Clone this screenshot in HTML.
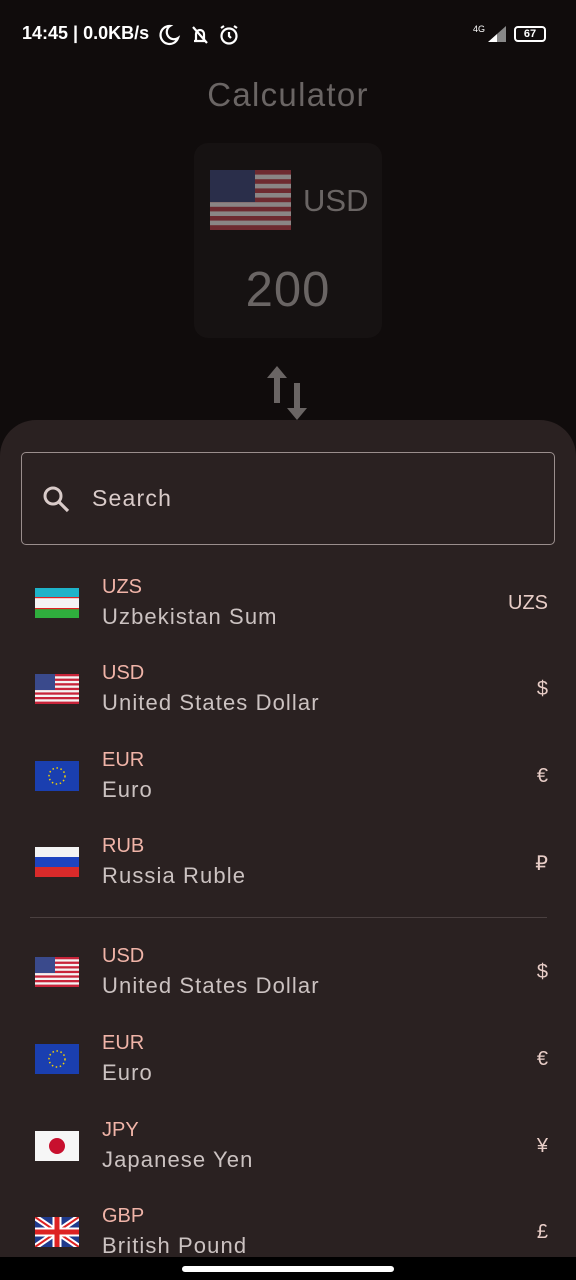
<!DOCTYPE html>
<html><head><meta charset="utf-8"><style>
*{margin:0;padding:0;box-sizing:border-box}
html,body{width:576px;height:1280px;overflow:hidden}
body{background:#100c0c;position:relative;font-family:"Liberation Sans",sans-serif}
.abs{position:absolute}
.sb{color:#fff;font-size:18px;font-weight:bold;top:23px;left:22px}
.title{top:76px;width:576px;text-align:center;color:#6a6564;font-size:33px;letter-spacing:1.3px}
.card{left:194px;top:143px;width:188px;height:195px;background:#161212;border-radius:14px}
.sheet{left:0;top:420px;width:576px;height:860px;background:#2a2121;border-radius:36px 36px 0 0}
.search{left:21px;top:452px;width:534px;height:93px;border:1.5px solid #9a8e8d;border-radius:5px}
.row{position:absolute;left:0;width:576px;height:86px}
.code{position:absolute;left:102px;top:0;color:#f0b4a8;font-size:20px}
.name{position:absolute;left:102px;top:28px;color:#cbc2c1;font-size:22px;letter-spacing:1.1px}
.sym{position:absolute;right:28px;top:16px;color:#e8cdc7;font-size:20px}
.flag{position:absolute;left:35px;top:12px;width:44px;height:30px}
</style></head><body>
<div class="abs sb">14:45 | 0.0KB/s</div>
<svg class="abs" style="left:158px;top:23px" width="90" height="24" viewBox="0 0 90 24" fill="none" stroke="#fff" stroke-width="2.2"><path d="M12 3a9 9 0 1 0 8 12a7 7 0 0 1-8-12z"/><path d="M36 18h12M38 17v-6a4 4 0 0 1 8 0v6M35 4l14 16"/><circle cx="71" cy="13" r="7.5"/><path d="M71 9v4l2 2M63 5l3-2M79 5l-3-2"/></svg>
<div class="abs" style="left:473px;top:24px;color:#fff;font-size:9px">4G</div>
<div class="abs" style="left:488px;top:26px;width:18px;height:16px;background:linear-gradient(90deg,#fff 0 50%,#888 50%);clip-path:polygon(0 100%,100% 0,100% 100%)"></div>
<div class="abs" style="left:514px;top:26px;width:32px;height:16px;border:2px solid #fff;border-radius:4px;color:#fff;font-size:11px;text-align:center;line-height:12px;font-weight:bold">67</div>
<div class="abs title">Calculator</div>
<div class="abs card"></div>
<svg class="abs" style="left:210px;top:170px" width="81" height="60" viewBox="0 0 81 60">
<rect width="81" height="60" fill="#8a8585"/>
<g fill="#6e2a30"><rect y="0" width="81" height="4.6"/><rect y="9.2" width="81" height="4.6"/><rect y="18.4" width="81" height="4.6"/><rect y="27.6" width="81" height="4.6"/><rect y="36.8" width="81" height="4.6"/><rect y="46" width="81" height="4.6"/><rect y="55.2" width="81" height="4.8"/></g>
<rect width="45" height="32" fill="#2a2e4a"/></svg>
<div class="abs" style="left:303px;top:183px;color:#6a6564;font-size:31px">USD</div>
<div class="abs" style="left:194px;width:188px;text-align:center;top:262px;color:#6a6564;font-size:49px;letter-spacing:1px">200</div>
<svg class="abs" style="left:264px;top:366px" width="46" height="54" viewBox="0 0 46 54"><g fill="#6a6564"><path d="M13 0 L3 12 H10 V37 H16 V12 H23 Z"/><path d="M33 54 L43 42 H36 V17 H30 V42 H23 Z"/></g></svg>
<div class="abs sheet"></div>
<div class="abs search"></div>
<svg class="abs" style="left:41px;top:484px" width="30" height="30" viewBox="0 0 30 30"><circle cx="12" cy="12" r="8" fill="none" stroke="#d9cbc9" stroke-width="3"/><path d="M18 18 L27 27" stroke="#d9cbc9" stroke-width="3.2"/></svg>
<div class="abs" style="left:92px;top:485px;color:#d9cbc9;font-size:23px;letter-spacing:1.2px">Search</div>

<div class="row" style="top:576px"><svg class="flag" viewBox="0 0 44 30"><rect width="44" height="10" fill="#1eb3c9"/><rect y="10" width="44" height="10" fill="#f4f4f4"/><rect y="20" width="44" height="10" fill="#2fae3d"/><rect y="9" width="44" height="1.2" fill="#d22"/><rect y="20" width="44" height="1.2" fill="#d22"/></svg><div class="code">UZS</div><div class="name">Uzbekistan Sum</div><div class="sym">UZS</div></div>
<div class="row" style="top:662px"><svg class="flag" viewBox="0 0 44 30"><rect width="44" height="30" fill="#f4f4f4"/><g fill="#c8243a"><rect y="0" width="44" height="2.3"/><rect y="4.6" width="44" height="2.3"/><rect y="9.2" width="44" height="2.3"/><rect y="13.8" width="44" height="2.3"/><rect y="18.4" width="44" height="2.3"/><rect y="23" width="44" height="2.3"/><rect y="27.6" width="44" height="2.4"/></g><rect width="20" height="16" fill="#3a4a8c"/></svg><div class="code">USD</div><div class="name">United States Dollar</div><div class="sym">$</div></div>
<div class="row" style="top:749px"><svg class="flag" viewBox="0 0 44 30"><rect width="44" height="30" fill="#1a3fb0"/><circle cx="22" cy="15" r="8" fill="none" stroke="#f6d100" stroke-width="1.5" stroke-dasharray="1.5 2.6"/></svg><div class="code">EUR</div><div class="name">Euro</div><div class="sym">€</div></div>
<div class="row" style="top:835px"><svg class="flag" viewBox="0 0 44 30"><rect width="44" height="10" fill="#f4f4f4"/><rect y="10" width="44" height="10" fill="#1e44c0"/><rect y="20" width="44" height="10" fill="#d92a2a"/></svg><div class="code">RUB</div><div class="name">Russia Ruble</div><div class="sym">₽</div></div>
<div class="abs" style="left:30px;top:917px;width:517px;height:1px;background:#4a4040"></div>
<div class="row" style="top:945px"><svg class="flag" viewBox="0 0 44 30"><rect width="44" height="30" fill="#f4f4f4"/><g fill="#c8243a"><rect y="0" width="44" height="2.3"/><rect y="4.6" width="44" height="2.3"/><rect y="9.2" width="44" height="2.3"/><rect y="13.8" width="44" height="2.3"/><rect y="18.4" width="44" height="2.3"/><rect y="23" width="44" height="2.3"/><rect y="27.6" width="44" height="2.4"/></g><rect width="20" height="16" fill="#3a4a8c"/></svg><div class="code">USD</div><div class="name">United States Dollar</div><div class="sym">$</div></div>
<div class="row" style="top:1032px"><svg class="flag" viewBox="0 0 44 30"><rect width="44" height="30" fill="#1a3fb0"/><circle cx="22" cy="15" r="8" fill="none" stroke="#f6d100" stroke-width="1.5" stroke-dasharray="1.5 2.6"/></svg><div class="code">EUR</div><div class="name">Euro</div><div class="sym">€</div></div>
<div class="row" style="top:1119px"><svg class="flag" viewBox="0 0 44 30"><rect width="44" height="30" fill="#f6f6f6"/><circle cx="22" cy="15" r="8" fill="#c8102e"/></svg><div class="code">JPY</div><div class="name">Japanese Yen</div><div class="sym">¥</div></div>
<div class="row" style="top:1205px"><svg class="flag" viewBox="0 0 44 30"><rect width="44" height="30" fill="#1f3a8c"/><path d="M0 0L44 30M44 0L0 30" stroke="#fff" stroke-width="6"/><path d="M0 0L44 30M44 0L0 30" stroke="#d22" stroke-width="2"/><path d="M22 0V30M0 15H44" stroke="#fff" stroke-width="9"/><path d="M22 0V30M0 15H44" stroke="#d22" stroke-width="5"/></svg><div class="code">GBP</div><div class="name">British Pound</div><div class="sym">£</div></div>
<div class="abs" style="left:0;top:1257px;width:576px;height:23px;background:#000"></div>
<div class="abs" style="left:182px;top:1266px;width:212px;height:6px;background:#fff;border-radius:3px"></div>
</body></html>
